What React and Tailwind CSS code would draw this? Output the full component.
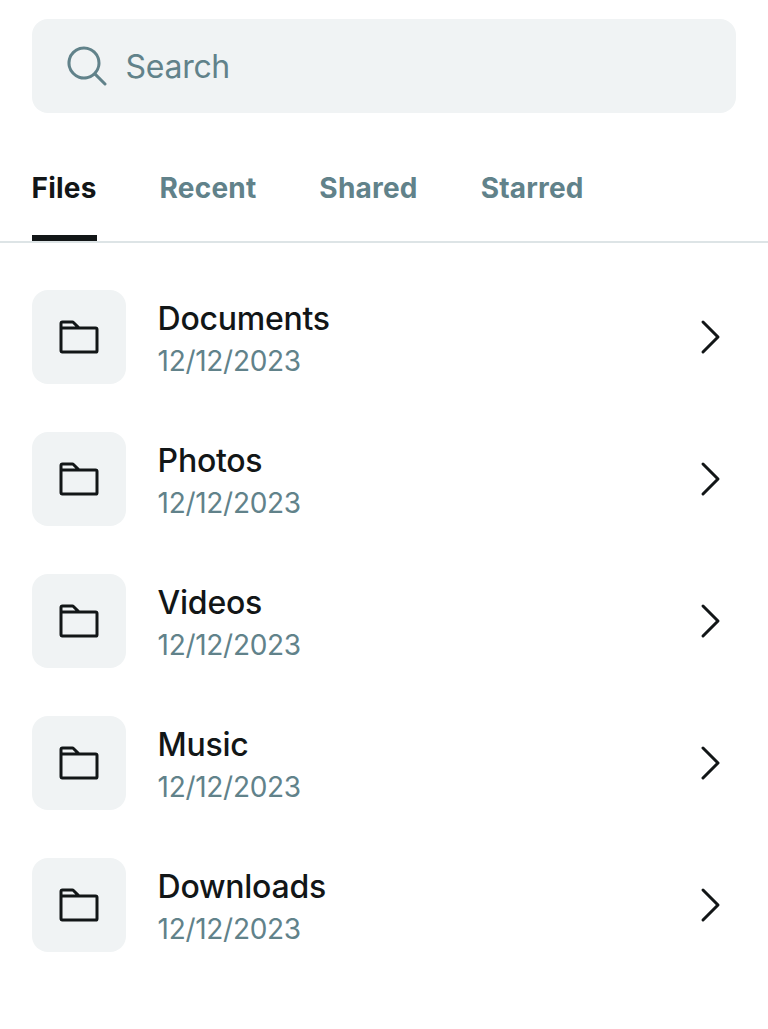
import React from 'react';

const FONT = { fontFamily: 'Inter, sans-serif' };

const tabs = ['Files', 'Recent', 'Shared', 'Starred'];
const folders = ['Documents', 'Photos', 'Videos', 'Music', 'Downloads'];

const SearchIcon = () => (
  <svg width="48" height="48" viewBox="0 0 256 256" fill="#61828a" className="shrink-0">
    <path d="M229.66,218.34l-50.07-50.06a88.11,88.11,0,1,0-11.31,11.31l50.06,50.07a8,8,0,0,0,11.32-11.32ZM40,112a72,72,0,1,1,72,72A72.08,72.08,0,0,1,40,112Z" />
  </svg>
);

const FolderIcon = () => (
  <svg width="48" height="48" viewBox="0 0 256 256" fill="#121617">
    <path d="M216,72H131.31L104,44.69A15.86,15.86,0,0,0,92.69,40H40A16,16,0,0,0,24,56V200.62A15.4,15.4,0,0,0,39.38,216H216.89A15.13,15.13,0,0,0,232,200.89V88A16,16,0,0,0,216,72ZM40,56H92.69l16,16H40ZM216,200H40V88H216Z" />
  </svg>
);

const CaretIcon = () => (
  <svg width="48" height="48" viewBox="0 0 256 256" fill="#121617">
    <path d="M181.66,133.66l-80,80a8,8,0,0,1-11.32-11.32L164.69,128,90.34,53.66a8,8,0,0,1,11.32-11.32l80,80A8,8,0,0,1,181.66,133.66Z" />
  </svg>
);

export default function App() {
  return (
    <div className="min-h-screen bg-white" style={FONT}>
      <div className="pl-[31.6px] pr-8 pt-[19px] pb-6">
        <div className="flex h-[94px] items-center gap-[15px] rounded-2xl bg-[#f0f3f4] px-[31px]">
          <SearchIcon />
          <span className="pt-[2px] text-[32px] tracking-[-0.3px] text-[#61828a]">Search</span>
        </div>
      </div>
      <div className="flex gap-[63px] border-b-2 border-[#dde4e6] pl-[31.6px] pr-8">
        {tabs.map((tab, i) => (
          <div
            key={tab}
            className={`flex h-[104px] items-center border-b-[6px] pt-1 text-[28px] font-bold tracking-[0.2px] ${
              i === 0 ? 'border-[#121617] text-[#121617]' : 'border-transparent text-[#61828a]'
            }`}
          >
            {tab}
          </div>
        ))}
      </div>
      <div className="pt-[23px]">
        {folders.map((name) => (
          <div key={name} className="flex h-[142px] items-center gap-8 pl-[31.6px] pr-[35px]">
            <div className="flex h-[94px] w-[94px] shrink-0 items-center justify-center rounded-2xl bg-[#f0f3f4]">
              <FolderIcon />
            </div>
            <div className="flex-1">
              <p className="text-[32px] leading-[48px] font-medium tracking-[-0.25px] text-[#121617]">{name}</p>
              <p className="text-[28px] leading-[36px] tracking-[-0.3px] text-[#61828a]">12/12/2023</p>
            </div>
            <CaretIcon />
          </div>
        ))}
      </div>
    </div>
  );
}
